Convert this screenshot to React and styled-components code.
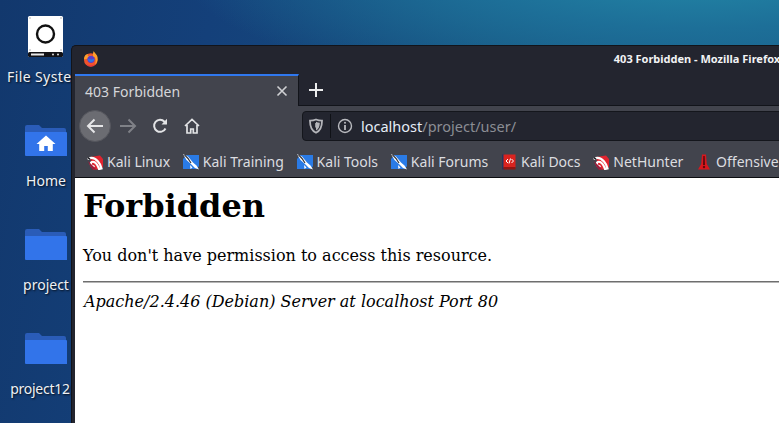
import React from "react";
import styled, { createGlobalStyle } from "styled-components";

const Global = createGlobalStyle`
  html, body { margin: 0; padding: 0; width: 779px; height: 423px; overflow: hidden; }
  #root { width: 779px; height: 423px; }
`;

const Desktop = styled.div`
  position: relative;
  width: 779px;
  height: 423px;
  overflow: hidden;
  font-family: "Noto Sans", sans-serif;
  background:
    radial-gradient(ellipse 520px 130px at 700px -30px, #2389a8 0%, #1d6f98 45%, rgba(26, 84, 128, 0) 100%),
    linear-gradient(100deg, #12386d 0%, #14407a 25%, #17527f 60%, #1a5f8c 100%);
`;

const IconColumn = styled.div`
  display: flex;
  flex-direction: column;
  width: 92px;
  padding-top: 15px;
  gap: 17px;
`;

const DesktopItem = styled.div`
  display: flex;
  flex-direction: column;
  align-items: center;
  height: 87px;
  &:first-child { height: 91px; margin-bottom: 1px; }
`;

const IconSlot = styled.div`
  height: ${(p) => p.$h}px;
  display: flex;
  align-items: flex-end;
  justify-content: center;
  width: 44px;
`;

const DesktopLabel = styled.div`
  margin-top: ${(p) => p.$mt}px;
  margin-right: ${(p) => p.$pull || 0}px;
  letter-spacing: ${(p) => p.$track || 0}px;
  font-size: 14px;
  line-height: 19px;
  color: #eef1f5;
  white-space: nowrap;
  text-shadow: 1px 1px 2px rgba(0, 0, 0, 0.8);
`;

const Window = styled.div`
  position: absolute;
  left: 71px;
  top: 45px;
  width: 1276px;
  height: 420px;
  box-sizing: border-box;
  padding-left: 3px;
  background: #23252f;
  border: 1px solid #12141a;
  border-right: 0;
  border-radius: 5px 5px 0 0;
  display: flex;
  flex-direction: column;
`;

const TitleBar = styled.div`
  position: relative;
  height: 28px;
  flex: none;
  display: flex;
  align-items: center;
  justify-content: center;
`;

const TitleLogo = styled.div`
  position: absolute;
  left: 8px;
  top: 4px;
  width: 16px;
  height: 16px;
`;

const TitleText = styled.div`
  font-size: 11px;
  font-weight: 700;
  color: #f2f3f5;
  margin-top: -3px;
  margin-right: 28px;
`;

const TabStrip = styled.div`
  height: 32px;
  flex: none;
  display: flex;
  align-items: stretch;
  box-sizing: border-box;
  border-bottom: 1px solid #12141a;
`;

const Tab = styled.div`
  width: 224px;
  height: 32px;
  box-sizing: border-box;
  background: #42444d;
  border-top: 2px solid #2f78ef;
  border-right: 1px solid #12141a;
  display: flex;
  align-items: center;
  justify-content: space-between;
  padding: 0 10px 0 10px;
  font-size: 14px;
  color: #d5d6d9;
`;

const NewTab = styled.div`
  width: 34px;
  display: flex;
  align-items: center;
  justify-content: center;
`;

const Toolbar = styled.div`
  height: 40px;
  flex: none;
  background: #42444d;
  display: flex;
  align-items: flex-start;
  padding-left: 4px;
`;

const NavButtons = styled.div`
  display: flex;
  align-items: center;
  height: 40px;
  width: 223px;
`;

const BackCircle = styled.div`
  width: 32px;
  height: 32px;
  margin-right: 1px;
  box-sizing: border-box;
  border-radius: 50%;
  background: #6b6c72;
  border: 1px solid #55565d;
  display: flex;
  align-items: center;
  justify-content: center;
`;

const NavIcon = styled.div`
  width: 32px;
  height: 32px;
  display: flex;
  align-items: center;
  justify-content: center;
`;

const UrlBar = styled.div`
  flex: 1;
  height: 30px;
  margin-top: 5px;
  margin-right: 200px;
  box-sizing: border-box;
  background: #23252f;
  border: 1px solid #14161c;
  border-radius: 4px;
  display: flex;
  align-items: center;
  padding-left: 5px;
  font-size: 14.5px;
`;

const UrlDivider = styled.div`
  width: 1px;
  height: 24px;
  background: #0f1116;
  margin: 0 6px 0 6px;
`;

const Host = styled.span`
  color: #e6edf7;
  margin-left: 8px;
`;

const UrlPath = styled.span`
  color: #8b8d94;
`;

const Bookmarks = styled.div`
  height: 32px;
  flex: none;
  box-sizing: border-box;
  background: #42444d;
  border-bottom: 1px solid #0c0d11;
  display: flex;
  align-items: center;
  padding-left: 12px;
  gap: 12.8px;
`;

const Bookmark = styled.div`
  display: flex;
  align-items: center;
  gap: 4px;
  font-size: 14px;
  color: #dcdde0;
  white-space: nowrap;
`;

const Page = styled.div`
  flex: 1;
  background: #fff;
  color: #000;
  padding: 8px;
  font-family: "DejaVu Serif", serif;
  font-size: 16px;
`;

const Heading = styled.h1`
  font-size: 32px;
  line-height: 38px;
  margin: 1px 0 21px;
  font-weight: 700;
`;

const Para = styled.p`
  margin: 0 0 16px;
  line-height: 19px;
`;

const Rule = styled.hr`
  margin: 0 0 9px;
  border: 0;
  border-top: 1px solid #6e6e6e;
  border-bottom: 1px solid #b5b5b5;
`;

const Address = styled.address`
  font-style: italic;
  line-height: 19px;
  padding-left: 1px;
`;

const Drive = () => (
  <svg width="38" height="43" viewBox="0 0 38 43">
    <rect x="1" y="1" width="35" height="41" rx="1.5" fill="#fff" />
    <rect x="1" y="37" width="35" height="5" rx="1.5" fill="#121216" />
    <rect x="4" y="38.5" width="13" height="2" fill="#e8e8e8" />
    <circle cx="26" cy="39.5" r="1" fill="#ddd" />
    <circle cx="31" cy="39.5" r="1" fill="#ddd" />
    <circle cx="18.5" cy="19" r="8.500" fill="none" stroke="#111" strokeWidth="2.400" />
    <g fill="#aaa">
      <circle cx="3" cy="3" r="0.8" /><circle cx="34" cy="3" r="0.8" />
      <circle cx="3" cy="35" r="0.8" /><circle cx="34" cy="35" r="0.8" />
    </g>
  </svg>
);

const Folder = ({ home }) => (
  <svg width="44" height="33" viewBox="0 0 44 33">
    <path d="M1 3a2 2 0 0 1 2-2h12l3 3h22a2 2 0 0 1 2 2v6H1z" fill="#2a5cb8" />
    <path d="M1 8h41a1 1 0 0 1 1 1v23H1.5L1 31z" fill="#3274ea" />
    {home && <path d="M22 11.5l-9.5 8.5h2.7v7h5v-5h3.6v5h5v-7h2.7z" fill="#fff" />}
  </svg>
);

const Firefox = () => (
  <svg width="16" height="16" viewBox="0 0 16 16">
    <circle cx="7.8" cy="9" r="6.8" fill="#f0542b" />
    <path d="M1 8.5C1 4 4 3 5 3c-.5 1-.3 1.6 0 2 1.5-.8 3.5-.8 5 .3C10 3 9.8 1.6 10.8 0c.4 2 3.3 3 3.8 6.5.4 2.8-.6 5.5-2.6 7 1-2.600 1-5.500-.5-7.500z" fill="#ff9f2b" />
    <circle cx="8" cy="8.300" r="3.600" fill="#5b3ec9" />
    <path d="M4.500 7.500c1.500 1 5 1.500 7 0-.3 2.500-2 3.500-3.500 3.500S5 10 4.500 7.500z" fill="#2a78e4" />
    <path d="M3 12.500c2.500 2.500 7 2.500 9.500.3-1 2-3 2.700-4.700 2.700-2 0-3.800-1.200-4.800-3z" fill="#e8323f" />
  </svg>
);

const Close = () => (
  <svg width="12" height="12" viewBox="0 0 12 12" stroke="#d0d1d4" strokeWidth="1.6">
    <path d="M1.500 1.500l9 9M10.500 1.500l-9 9" />
  </svg>
);

const Plus = () => (
  <svg width="14" height="14" viewBox="0 0 14 14" stroke="#eceded" strokeWidth="2">
    <path d="M7 0v14M0 7h14" />
  </svg>
);

const Arrow = ({ color, flip }) => (
  <svg width="18" height="16" viewBox="0 0 18 16" fill="none" stroke={color} strokeWidth="2" style={flip ? { transform: "scaleX(-1)" } : undefined}>
    <path d="M17 8H2M8.500 1.500L2 8l6.500 6.500" />
  </svg>
);

const Reload = () => (
  <svg width="16" height="16" viewBox="0 0 16 16" fill="none" stroke="#e2e3e5" strokeWidth="2">
    <path d="M13.500 10.500A6 6 0 1 1 12.500 3.700L14 5.500" />
    <path d="M15 .8V6.500H9.500z" fill="#e2e3e5" stroke="none" />
  </svg>
);

const Home = () => (
  <svg width="16" height="16" viewBox="0 0 16 16" fill="none" stroke="#e2e3e5" strokeWidth="1.700">
    <path d="M1 8l7-6.500L15 8M3 7v8h3.700v-4h2.600v4H13V7" />
  </svg>
);

const Shield = () => (
  <svg width="16" height="16" viewBox="0 0 16 16">
    <path d="M8 1.500c2 .9 4 1.200 6 1.200 0 5.800-1 9.800-6 12C3 12.500 2 8.500 2 2.700c2 0 4-.3 6-1.200z" fill="none" stroke="#b4b5ba" strokeWidth="1.800" />
    <path d="M8 3.800v8.700c2.800-1.500 3.700-4 3.800-7.700-1.300 0-2.600-.4-3.800-1z" fill="#b4b5ba" />
    <rect x="7.200" y="5" width="1.600" height="4.500" fill="#b4b5ba" />
  </svg>
);

const Info = () => (
  <svg width="16" height="16" viewBox="0 0 16 16" fill="none" stroke="#b9babf" strokeWidth="1.400">
    <circle cx="8" cy="8" r="6.500" />
    <path d="M8 7v5" strokeWidth="1.800" />
    <circle cx="8" cy="4.700" r="1" fill="#b9babf" stroke="none" />
  </svg>
);

const KaliRed = () => (
  <svg width="16" height="16" viewBox="0 0 16 16">
    <path d="M3 3L13 1.500 16 5v8l-3 2.500H6z" fill="#e0242f" />
    <path d="M.5 5C4 3 8 4 11 7.500c2 2.300 3 4.500 3.500 7L12 15c-1-3-2.500-6-5-7-2-.8-3.500.5-3 2.500.4 1.500 2 2.200 3.500 1.500" fill="none" stroke="#fff" strokeWidth="2.200" />
    <path d="M1 7l2 5 2.500 3.500H9l-1-1.500z" fill="#9a1c3c" />
    <path d="M.5 3.500L3 5" stroke="#26262c" strokeWidth="1.500" />
  </svg>
);

const KaliBlue = () => (
  <svg width="16" height="16" viewBox="0 0 16 16">
    <path d="M3.500 1H16v11l-2 3H0V5z" fill="#2a7be6" />
    <path d="M0 0l5 2.500 5 6 3.500 3 2.500 4-4-1.500-3.500-3.500L3.500 6z" fill="#fff" />
    <path d="M1.500.8L5 4.500l3 4.500" fill="none" stroke="#33343a" strokeWidth="1.200" />
    <path d="M7 11l2.500 2.500-2 1.500z" fill="#fff" />
  </svg>
);

const KaliDocs = () => (
  <svg width="16" height="16" viewBox="0 0 16 16">
    <rect x="1" y="0.500" width="3" height="15" fill="#23365f" />
    <rect x="2.500" y="0.500" width="12" height="13" fill="#d9231f" />
    <rect x="2.500" y="13" width="12" height="2.500" fill="#8f1512" />
    <path d="M7 5L5 7l2 2M10.500 5l2 2-2 2M9.500 4.500L8 9.500" stroke="#fff" strokeWidth="1" fill="none" />
  </svg>
);

const Exploit = () => (
  <svg width="16" height="16" viewBox="0 0 16 16">
    <path d="M6 .5h4l.8 9.500L14 15.500H2L5.200 10z" fill="#d8171d" />
    <path d="M7.300 2h1.400l.3 9H7z" fill="#5c0a0e" />
    <circle cx="8" cy="13" r="1.200" fill="#5c0a0e" />
  </svg>
);

const icons = [
  { name: "File System", Art: Drive, h: 43, mt: 9, track: 0.4 },
  { name: "Home", Art: () => <Folder home />, h: 33, mt: 14 },
  { name: "project", Art: Folder, h: 33, mt: 14 },
  { name: "project12", Art: Folder, h: 33, mt: 14, pull: 12, track: -0.25 },
];

const marks = [
  ["Kali Linux", KaliRed],
  ["Kali Training", KaliBlue],
  ["Kali Tools", KaliBlue],
  ["Kali Forums", KaliBlue],
  ["Kali Docs", KaliDocs],
  ["NetHunter", KaliRed],
  ["Offensive", Exploit],
];

export default function App() {
  return (
    <Desktop>
      <Global />
      <IconColumn>
        {icons.map(({ name, Art, h, mt, pull, track }) => (
          <DesktopItem key={name}>
            <IconSlot $h={h}><Art /></IconSlot>
            <DesktopLabel $mt={mt} $pull={pull} $track={track}>{name}</DesktopLabel>
          </DesktopItem>
        ))}
      </IconColumn>
      <Window>
        <TitleBar>
          <TitleLogo><Firefox /></TitleLogo>
          <TitleText>403 Forbidden - Mozilla Firefox</TitleText>
        </TitleBar>
        <TabStrip>
          <Tab>403 Forbidden<Close /></Tab>
          <NewTab><Plus /></NewTab>
        </TabStrip>
        <Toolbar>
          <NavButtons>
            <BackCircle><Arrow color="#e6e6e8" /></BackCircle>
            <NavIcon><Arrow color="#7f8187" flip /></NavIcon>
            <NavIcon><Reload /></NavIcon>
            <NavIcon><Home /></NavIcon>
          </NavButtons>
          <UrlBar>
            <Shield />
            <UrlDivider />
            <Info />
            <Host>localhost</Host><UrlPath>/project/user/</UrlPath>
          </UrlBar>
        </Toolbar>
        <Bookmarks>
          {marks.map(([label, Mark]) => (
            <Bookmark key={label}><Mark />{label}</Bookmark>
          ))}
        </Bookmarks>
        <Page>
          <Heading>Forbidden</Heading>
          <Para>You don't have permission to access this resource.</Para>
          <Rule />
          <Address>Apache/2.4.46 (Debian) Server at localhost Port 80</Address>
        </Page>
      </Window>
    </Desktop>
  );
}
